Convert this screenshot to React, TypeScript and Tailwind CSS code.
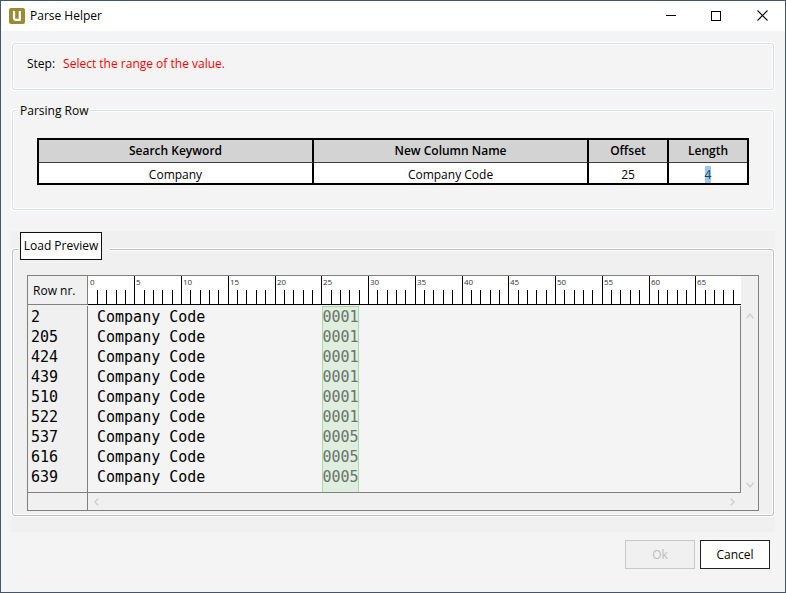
import type { ReactNode } from "react";

const STEP = 9.35;
const TICKS = Array.from({ length: 70 }, (_, i) => i);

const rows = [
  { nr: 2, code: "0001" },
  { nr: 205, code: "0001" },
  { nr: 424, code: "0001" },
  { nr: 439, code: "0001" },
  { nr: 510, code: "0001" },
  { nr: 522, code: "0001" },
  { nr: 537, code: "0005" },
  { nr: 616, code: "0005" },
  { nr: 639, code: "0005" },
];

function TitleBar() {
  return (
    <header className="flex h-[30px] items-center bg-white pl-2">
      <svg width="16" height="16" viewBox="0 0 16 16" aria-hidden="true">
        <rect width="16" height="16" rx="2" fill="#9a8b35" />
        <path d="M5 3v6.800q0 2 2 2h4.200M10.800 3v9.800" fill="none" stroke="#fff" strokeWidth="2.2" />
      </svg>
      <h1 className="ml-[5px] flex-1 text-xs">Parse Helper</h1>
      <button type="button" aria-label="Minimize" className="flex h-full w-11 items-center justify-center">
        <svg width="10" height="10" shapeRendering="crispEdges">
          <rect y="4" width="10" height="1" />
        </svg>
      </button>
      <button type="button" aria-label="Maximize" className="flex h-full w-[46px] items-center justify-center pb-px">
        <svg width="10" height="10" shapeRendering="crispEdges">
          <rect x="0.5" y="0.5" width="9" height="9" fill="none" stroke="#000" />
        </svg>
      </button>
      <button type="button" aria-label="Close" className="flex h-full w-[46px] items-center justify-center pb-px">
        <svg width="11" height="11">
          <path d="M0.5 0.5l10 10M10.5 0.5l-10 10" stroke="#000" strokeWidth="1.1" />
        </svg>
      </button>
    </header>
  );
}

function Chevron({ d, w, h }: { d: string; w: number; h: number }) {
  return (
    <svg width={w} height={h} viewBox={`0 0 ${w} ${h}`} aria-hidden="true">
      <path d={d} fill="none" stroke="#cfcfcf" strokeWidth="1.4" />
    </svg>
  );
}

function Ruler() {
  return (
    <svg className="block h-[29px] w-full bg-white" aria-label="Column ruler">
      {TICKS.map((i) => {
        const x = Math.floor(i * STEP);
        const major = i % 5 === 0;
        return (
          <g key={i}>
            {i > 0 && <rect x={x} y={major ? 0 : 14} width="1" height={major ? 29 : 15} fill="#000" />}
            {major && (
              <text x={x + 2} y="9" fontSize="8" fill="#333">
                {i}
              </text>
            )}
          </g>
        );
      })}
      <rect y="28" width="100%" height="1" fill="#000" />
    </svg>
  );
}

function HeadCell({ children }: { children: ReactNode }) {
  return (
    <th scope="col" className="h-[23px] border-r-2 border-b border-r-black border-b-[#404040] bg-[#d3d3d3] p-0 text-center font-semibold last:border-r-0">
      {children}
    </th>
  );
}

function Cell({ children }: { children: ReactNode }) {
  return <td className="h-5 border-r-2 border-black bg-white p-0 pt-1 text-center leading-4 last:border-r-0">{children}</td>;
}

const frame = "rounded-[3px] border shadow-[0_0_0_1px_#fff,inset_0_0_0_1px_#fff]";

export default function App() {
  return (
    <div className="flex min-h-screen flex-col border border-[#44566c] bg-[#f4f4f4] font-['Open_Sans','Noto_Sans',sans-serif] text-xs text-black">
      <TitleBar />
      <main className="flex flex-col px-[10px] pt-3">
        <section className={`mx-px flex h-[47px] items-center gap-2 border-[#d5dfe5] px-[14px] pb-[6px] ${frame}`}>
          <span>Step:</span>
          <span className="text-[#ff0000]">Select the range of the value.</span>
        </section>

        <fieldset className={`mx-px mt-3 border-[#d5dfe5] px-6 pb-6 ${frame}`}>
          <legend className="-ml-[19px] h-4 bg-[#f4f4f4] px-[2px] leading-[18px]">Parsing Row</legend>
          <table className="mt-5 w-full table-fixed border-separate border-spacing-0 border-2 border-black">
            <colgroup>
              <col />
              <col />
              <col className="w-20" />
              <col className="w-[78px]" />
            </colgroup>
            <thead>
              <tr>
                <HeadCell>Search Keyword</HeadCell>
                <HeadCell>New Column Name</HeadCell>
                <HeadCell>Offset</HeadCell>
                <HeadCell>Length</HeadCell>
              </tr>
            </thead>
            <tbody>
              <tr>
                <Cell>Company</Cell>
                <Cell>Company Code</Cell>
                <Cell>25</Cell>
                <Cell>
                  <mark className="bg-[#99c9ef] text-[#1c3f5c]">4</mark>
                </Cell>
              </tr>
            </tbody>
          </table>
        </fieldset>

        <div className="mt-[21px] bg-[#f0f0f0] px-px pt-px pb-4">
          <fieldset className={`border-[#bfbfbf] px-[14px] pb-[4px] ${frame}`}>
            <legend className="-ml-[9px] bg-[#f0f0f0] pr-2 pb-[6px] pl-[2px]">
              <button type="button" className="block h-7 w-[82px] border border-[#111] bg-white whitespace-nowrap">
                Load Preview
              </button>
            </legend>
            <div className="mt-[9px] grid grid-cols-[59px_1fr_17px] border border-[#808080]">
              <div className="flex items-center border-b border-[#808080] pt-[2px] pl-[5px]">Row nr.</div>
              <div className="col-start-2 border-l border-[#808080]">
                <Ruler />
              </div>
              <div />

              <ol className="pt-[2px] pl-[3px] font-['DejaVu_Sans_Mono',monospace] text-[15px] leading-5">
                {rows.map((r) => (
                  <li key={r.nr}>{r.nr}</li>
                ))}
              </ol>
              <div className="mt-px border-x border-[#808080] bg-[#f4f4f4] font-['DejaVu_Sans_Mono',monospace] text-[15px] leading-5">
                <div className="flex h-[186px]">
                  <div className="w-[234px] pt-px pl-[9px]">
                    {rows.map((r) => (
                      <div key={r.nr}>Company Code</div>
                    ))}
                  </div>
                  <div className="w-[37px] border-x border-t border-[#a9dba9] bg-[#dfeedf] text-[#6b736b]">
                    {rows.map((r) => (
                      <div key={r.nr} className="flex justify-center">
                        {r.code}
                      </div>
                    ))}
                  </div>
                </div>
              </div>
              <div className="flex flex-col items-center justify-between pt-2 pb-1">
                <Chevron w={8} h={6} d="M0.5 5.3L4 1.2L7.500 5.3" />
                <Chevron w={8} h={6} d="M0.5 0.700L4 4.800L7.500 0.700" />
              </div>

              <div className="border-t border-[#808080]" />
              <div className="flex h-[18px] items-center justify-between border-t border-l border-[#808080] pr-[6px] pl-[6px]">
                <Chevron w={5} h={8} d="M4.300 0.5L1 4L4.300 7.500" />
                <Chevron w={5} h={8} d="M0.700 0.5L4 4L0.700 7.500" />
              </div>
              <div />
            </div>
          </fieldset>
        </div>
      </main>
      <footer className="flex justify-end gap-[5px] px-[15px] pt-2 pb-[23px]">
        <button type="button" disabled className="h-[29px] w-[70px] border border-[#c8c8c8] bg-[#f0f0f0] text-[#bdbdbd]">
          Ok
        </button>
        <button type="button" className="h-[29px] w-[70px] border border-[#222] bg-white">
          Cancel
        </button>
      </footer>
    </div>
  );
}
